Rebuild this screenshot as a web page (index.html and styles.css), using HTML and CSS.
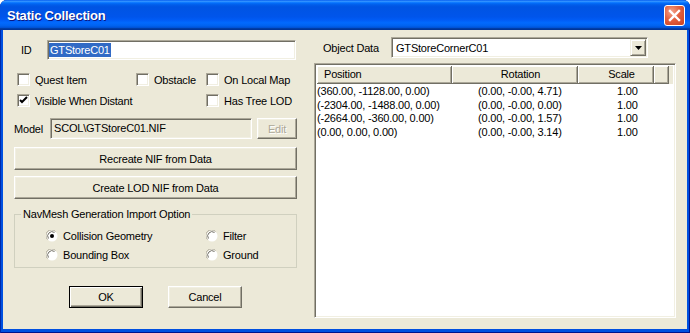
FILE: index.html
```html
<html>
  <head>
    <link rel="stylesheet" href="styles.css">
  </head>
  <body>
    <div class="window">
      <div class="titlebar">
        <span class="title">Static Collection</span>
        <span class="close">
          <svg width="19" height="19" viewBox="0 0 19 19"><path d="M5 5 L14 14 M14 5 L5 14" stroke="#fff" stroke-width="2.4" stroke-linecap="square"/></svg>
        </span>
      </div>
      <div class="client">
        <div class="left">
          <div class="idrow">
            <span class="idlbl">ID</span>
            <div class="edit sunken"><span class="sel">GTStoreC01</span></div>
          </div>

          <div class="checks">
            <div class="chk"><span class="box"></span>Quest Item</div>
            <div class="chk"><span class="box"></span>Obstacle</div>
            <div class="chk"><span class="box"></span>On Local Map</div>
            <div class="chk wide"><span class="box"><svg width="9" height="9" viewBox="0 0 9 9"><path d="M1 4 L3 6 L8 1" stroke="#000" stroke-width="2" fill="none"/></svg></span>Visible When Distant</div>
            <div class="chk"><span class="box"></span>Has Tree LOD</div>
          </div>

          <div class="modelrow">
            <span class="modellbl">Model</span>
            <div class="modelfield sunken">SCOL\GTStoreC01.NIF</div>
            <div class="btn small disabled">Edit</div>
          </div>

          <div class="btn wide first">Recreate NIF from Data</div>
          <div class="btn wide second">Create LOD NIF from Data</div>

          <fieldset class="group">
            <legend>NavMesh Generation Import Option</legend>
            <div class="radios">
              <div class="rad"><svg class="rb" width="12" height="12" viewBox="0 0 12 12"><circle cx="6" cy="6" r="5.5" fill="#fff"/><path d="M1.5 9.5 A5.5 5.5 0 0 1 9.5 1.5" stroke="#ACA899" stroke-width="1" fill="none"/><path d="M2.5 8.5 A4.3 4.3 0 0 1 8.5 2.5" stroke="#716F64" stroke-width="1" fill="none"/><circle cx="6" cy="6" r="2" fill="#000"/></svg>Collision Geometry</div>
              <div class="rad"><svg class="rb" width="12" height="12" viewBox="0 0 12 12"><circle cx="6" cy="6" r="5.5" fill="#fff"/><path d="M1.5 9.5 A5.5 5.5 0 0 1 9.5 1.5" stroke="#ACA899" stroke-width="1" fill="none"/><path d="M2.5 8.5 A4.3 4.3 0 0 1 8.5 2.5" stroke="#716F64" stroke-width="1" fill="none"/></svg>Filter</div>
              <div class="rad"><svg class="rb" width="12" height="12" viewBox="0 0 12 12"><circle cx="6" cy="6" r="5.5" fill="#fff"/><path d="M1.5 9.5 A5.5 5.5 0 0 1 9.5 1.5" stroke="#ACA899" stroke-width="1" fill="none"/><path d="M2.5 8.5 A4.3 4.3 0 0 1 8.5 2.5" stroke="#716F64" stroke-width="1" fill="none"/></svg>Bounding Box</div>
              <div class="rad"><svg class="rb" width="12" height="12" viewBox="0 0 12 12"><circle cx="6" cy="6" r="5.5" fill="#fff"/><path d="M1.5 9.5 A5.5 5.5 0 0 1 9.5 1.5" stroke="#ACA899" stroke-width="1" fill="none"/><path d="M2.5 8.5 A4.3 4.3 0 0 1 8.5 2.5" stroke="#716F64" stroke-width="1" fill="none"/></svg>Ground</div>
            </div>
          </fieldset>

          <div class="okrow">
            <div class="btn dlg default">OK</div>
            <div class="btn dlg">Cancel</div>
          </div>
        </div>

        <div class="right">
          <div class="odrow">
            <span class="odlbl">Object Data</span>
            <div class="combo sunken">
              <span class="combotext">GTStoreCornerC01</span>
              <span class="arrow"><svg width="7" height="4" viewBox="0 0 7 4"><path d="M0 0 H7 L3.5 4 Z" fill="#000"/></svg></span>
            </div>
          </div>

          <div class="list sunken">
            <div class="hdr">
              <div class="hc c1">Position</div>
              <div class="hc c2">Rotation</div>
              <div class="hc c3">Scale</div>
              <div class="hc c4"></div>
            </div>
            <div class="rows">
              <div class="row"><span class="c1">(360.00, -1128.00, 0.00)</span><span class="c2">(0.00, -0.00, 4.71)</span><span class="c3">1.00</span></div>
              <div class="row"><span class="c1">(-2304.00, -1488.00, 0.00)</span><span class="c2">(0.00, -0.00, 0.00)</span><span class="c3">1.00</span></div>
              <div class="row"><span class="c1">(-2664.00, -360.00, 0.00)</span><span class="c2">(0.00, -0.00, 1.57)</span><span class="c3">1.00</span></div>
              <div class="row"><span class="c1">(0.00, 0.00, 0.00)</span><span class="c2">(0.00, -0.00, 3.14)</span><span class="c3">1.00</span></div>
            </div>
          </div>
        </div>
      </div>
    </div>
  </body>
</html>
```

FILE: styles.css
```css
* { box-sizing: border-box; }

body {
  margin: 0;
  background: #fff;
  font-family: "Liberation Sans", Arial, sans-serif;
  font-size: 11px;
  letter-spacing: -0.2px;
  color: #000;
}

.window {
  width: 690px;
  height: 333px;
  display: flex;
  flex-direction: column;
  border-radius: 7px 7px 0 0;
  overflow: hidden;
  background: #0050E0;
  box-shadow: inset 1px 0 #0029A8, inset -1px 0 #00138C, inset 0 -1px #00138C;
}

.titlebar {
  height: 30px;
  flex: none;
  display: flex;
  align-items: center;
  padding: 0 5px 0 7px;
  background: linear-gradient(to bottom, #0058EE 0%, #3593FF 4%, #288EFF 6%, #127DFF 8%, #036FFC 10%, #0262EE 14%, #0057E5 20%, #0054E3 24%, #0055EB 56%, #005BF5 66%, #026AFE 76%, #0062EF 86%, #0052D6 92%, #0040AB 94%, #003092 100%);
}

.title {
  flex: 1;
  color: #fff;
  font-weight: bold;
  font-size: 13px;
  letter-spacing: -0.2px;
  text-shadow: 1px 1px #0A1883;
}

.close {
  width: 21px;
  height: 21px;
  border: 1px solid #fff;
  border-radius: 3px;
  background: radial-gradient(circle at 35% 30%, #F4A48C 0%, #E2603F 45%, #C8401F 100%);
  display: flex;
  align-items: center;
  justify-content: center;
}

.client {
  flex: 1;
  margin: 0 3px 4px 3px;
  background: #ECE9D8;
  display: flex;
  gap: 17px;
  padding-left: 11px;
}

.left { width: 283px; display: flex; flex-direction: column; }
.right { width: 362px; display: flex; flex-direction: column; }

.sunken {
  border: 1px solid;
  border-color: #ACA899 #fff #fff #ACA899;
  box-shadow: inset 1px 1px #716F64, inset -1px -1px #F1EFE2;
}

/* id row */
.idrow { margin-top: 10px; height: 20px; display: flex; align-items: center; }
.idlbl { width: 33px; padding-left: 7px; }
.edit {
  width: 249px;
  height: 20px;
  background: #fff;
  display: flex;
  align-items: center;
  padding-left: 1px;
}
.sel { background: #316AC5; color: #fff; padding: 0 1px; line-height: 14px; }

/* checkboxes */
.checks {
  margin-top: 13px;
  display: grid;
  grid-template-columns: 119px 70px auto;
  row-gap: 8px;
  padding-left: 3px;
}
.chk { display: flex; align-items: center; gap: 5px; height: 13px; white-space: nowrap; }
.chk.wide { grid-column: 1 / 3; }
.box {
  width: 13px;
  height: 13px;
  flex: none;
  background: #fff;
  border: 1px solid;
  border-color: #ACA899 #fff #fff #ACA899;
  box-shadow: inset 1px 1px #716F64, inset -1px -1px #F1EFE2;
  display: flex;
  align-items: center;
  justify-content: center;
}

/* model row */
.modelrow { margin-top: 11px; height: 21px; display: flex; align-items: center; }
.modellbl { width: 36px; }
.modelfield {
  width: 202px;
  height: 21px;
  padding-left: 3px;
  line-height: 19px;
  background: #ECE9D8;
}

/* buttons */
.btn {
  background: #ECE9D8;
  border: 1px solid;
  border-color: #fff #716F64 #716F64 #fff;
  box-shadow: inset -1px -1px #ACA899, inset 1px 1px #F1EFE2;
  display: flex;
  align-items: center;
  justify-content: center;
}
.btn.small { width: 40px; height: 21px; margin-left: 5px; }
.btn.disabled { color: #ACA899; text-shadow: 1px 1px #fff; }
.btn.wide { width: 283px; height: 23px; }
.btn.first { margin-top: 8px; }
.btn.second { margin-top: 6px; }
.btn.dlg { width: 74px; height: 22px; }
.btn.default {
  border-color: #000;
  box-shadow: inset 1px 1px #fff, inset -1px -1px #716F64, inset -2px -2px #ACA899;
}

/* group box */
.group {
  margin: 9px 0 0 0;
  padding: 0;
  min-width: 0;
  height: 60px;
  border: 1px solid #D0D0BF;
}
.group legend { margin-left: 6px; padding: 0 2px; }
.radios {
  margin-top: 10px;
  padding-left: 31px;
  display: grid;
  grid-template-columns: 160px auto;
  row-gap: 7px;
}
.rad { display: flex; align-items: center; gap: 5px; height: 12px; white-space: nowrap; }
.rb { flex: none; }

.okrow { margin-top: 18px; display: flex; gap: 25px; padding-left: 55px; }

/* right side */
.odrow { margin-top: 7px; height: 21px; display: flex; align-items: center; }
.odlbl { width: 77px; padding-left: 9px; }
.combo {
  width: 257px;
  height: 21px;
  background: #fff;
  display: flex;
  align-items: center;
  padding: 0 1px 0 4px;
}
.combotext { flex: 1; }
.arrow {
  width: 16px;
  height: 17px;
  background: #ECE9D8;
  border: 1px solid;
  border-color: #F1EFE2 #716F64 #716F64 #F1EFE2;
  box-shadow: inset 1px 1px #fff, inset -1px -1px #ACA899;
  display: flex;
  align-items: center;
  justify-content: center;
}

.list { margin-top: 5px; height: 255px; background: #fff; padding: 2px; }
.hdr { display: flex; height: 18px; background: #ECE9D8; }
.hc {
  height: 18px;
  line-height: 17px;
  border-right: 1px solid #716F64;
  border-bottom: 1px solid #716F64;
  box-shadow: inset 1px 1px #fff, inset -1px -1px #ACA899;
}
.hdr .c1 { width: 135px; padding-left: 7px; }
.hdr .c2 { width: 126px; text-align: center; padding-left: 12px; }
.hdr .c3 { width: 76px; text-align: center; padding-left: 12px; }
.hdr .c4 { width: 15px; }

.rows { padding-top: 1px; }
.row { display: flex; height: 13.5px; line-height: 13px; white-space: nowrap; }
.row .c1 { width: 135px; padding-left: 0; }
.row .c2 { width: 126px; padding-left: 26px; }
.row .c3 { width: 76px; padding-left: 39px; }
```
